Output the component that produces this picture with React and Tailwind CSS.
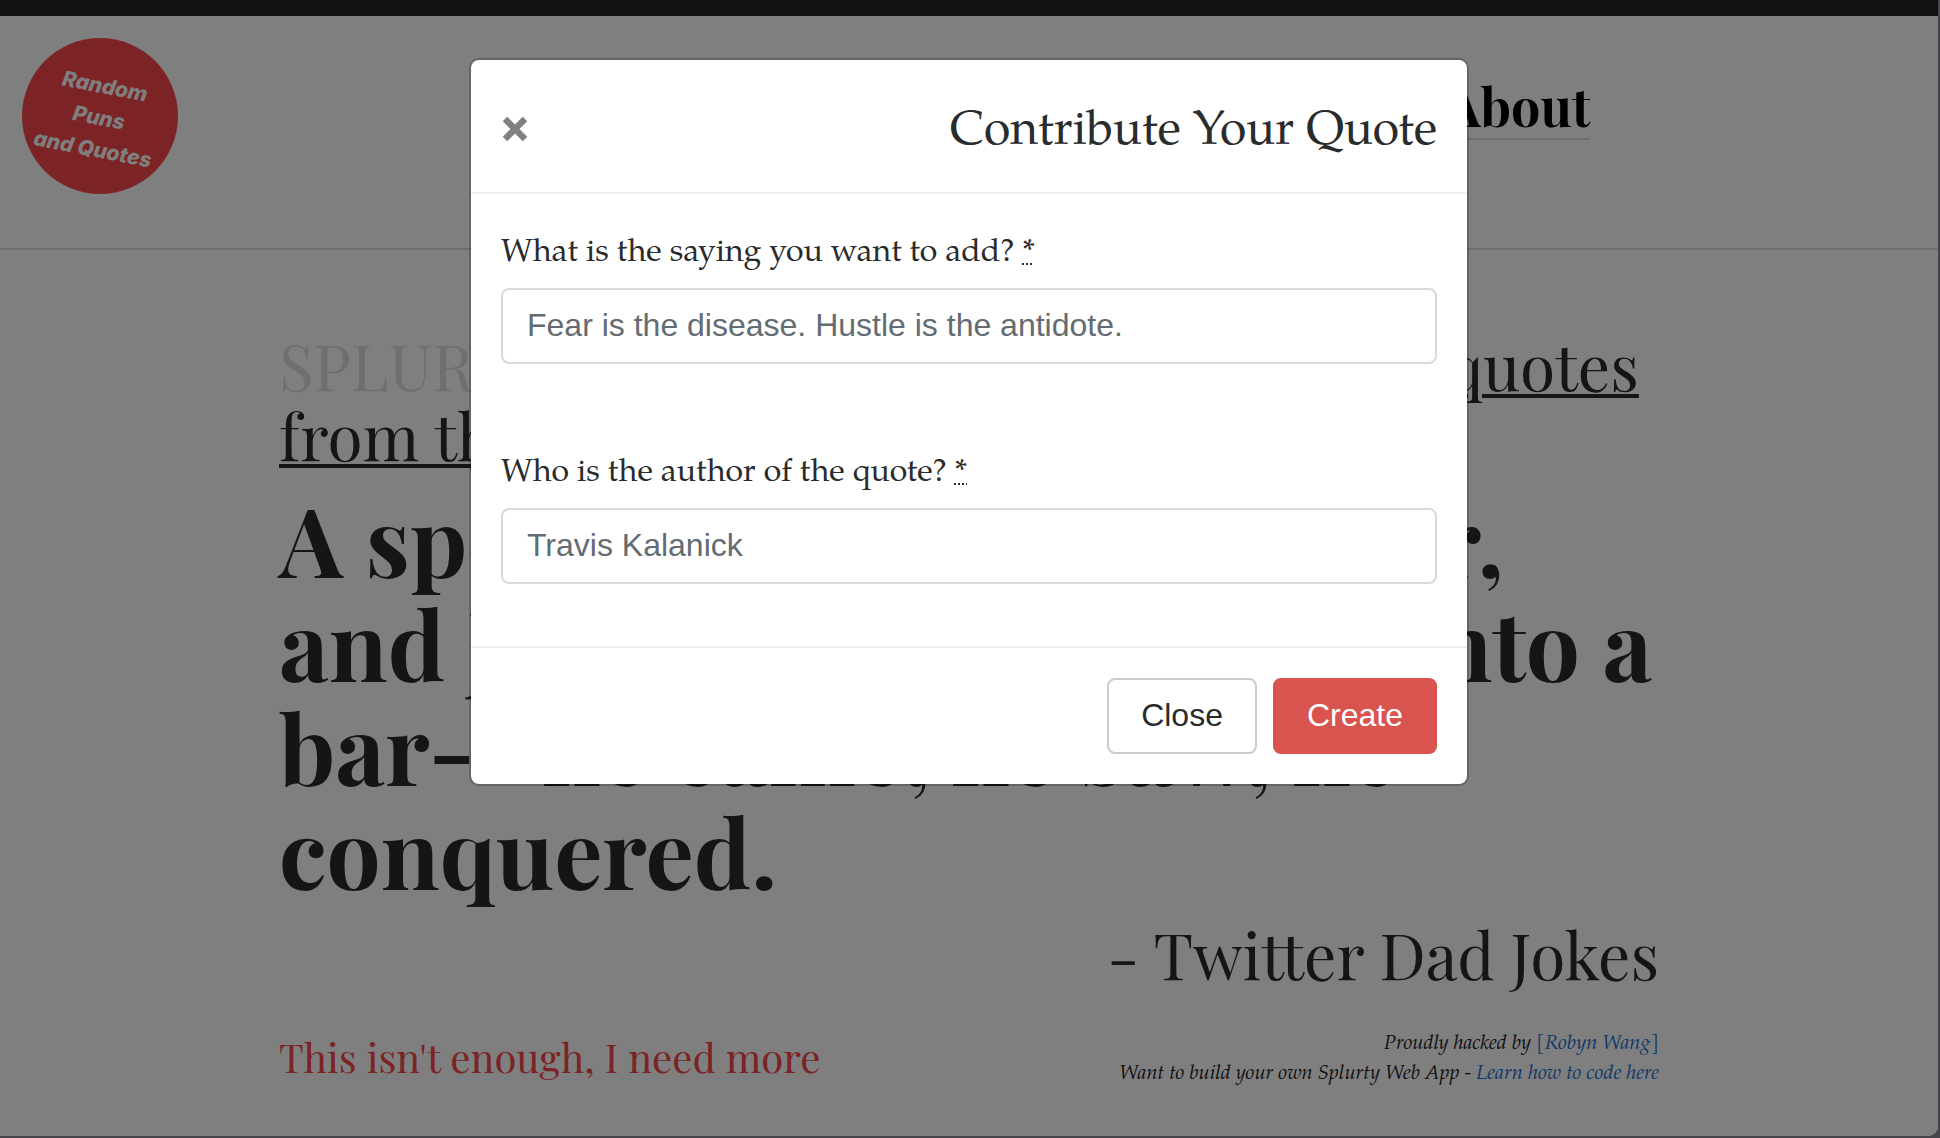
import React from "react";

const serif = "font-['Playfair_Display','Liberation_Serif',serif]";
const book = "font-['Palatino','Palatino_Linotype','TeX_Gyre_Pagella','P052','URW_Palladio_L','Book_Antiqua','Liberation_Serif',serif]";
const sans = "font-['Liberation_Sans',sans-serif]";

function Header() {
  return (
    <header className="flex items-start justify-between border-b-2 border-[#dfdfdf] px-[22px] pt-[22px] pb-[54px]">
      <a
        href="#home"
        className="flex size-[156px] items-center justify-center rounded-full bg-[#f8464a] pt-1 pr-0.5 text-center font-['Inter',sans-serif] text-[21px] leading-8 font-extrabold text-white italic"
      >
        <span className="block rotate-[11deg] whitespace-nowrap">
          Random
          <br />
          Puns
          <br />
          and Quotes
        </span>
      </a>
      <nav className={`mr-[17.2%] pt-9 ${serif}`}>
        <a href="#about" className="block border-b-2 border-[#dcdcdc] text-[52px] leading-[64px] font-bold text-black">
          About
        </a>
      </nav>
    </header>
  );
}

function QuotePage() {
  return (
    <main className={`mx-auto w-full max-w-[1440px] px-[30px] pt-20 text-[#292b2c] ${serif}`}>
      <h1 className="text-[64px] leading-[70px]">
        <span className="text-[#dedede]">SPLURTY</span> - a collection of{" "}
        <span className="underline decoration-4 underline-offset-[3px]">
          your favourite quotes
          <br />
          from the web
        </span>
      </h1>
      <blockquote className="mt-4 text-[96px] leading-[104px] font-bold">
        A sperm doner, a carpenter,
        <br />
        and Julius Caesar walked into a
        <br />
        bar-- he came, he saw, he
        <br />
        conquered.
      </blockquote>
      <p className="mt-4 text-right text-[64px] leading-[72px]">- Twitter Dad Jokes</p>
      <footer className="mt-[34px] flex items-center justify-between">
        <a href="#more" className="text-[40px] leading-[48px] text-[#f8464a]">
          This isn't enough, I need more
        </a>
        <p className={`pt-1.5 text-right text-[20px] leading-[30px] text-[#1c1c1c] italic ${book}`}>
          Proudly hacked by{" "}
          <a href="#author" className="text-[#1a70d0]">[Robyn Wang]</a>
          <br />
          Want to build your own Splurty Web App -{" "}
          <a href="#learn" className="text-[#1a70d0]">Learn how to code here</a>
        </p>
      </footer>
    </main>
  );
}

function Field({ id, label, placeholder }) {
  return (
    <div className="mb-8 flex flex-col gap-1">
      <label htmlFor={id} className="text-[32px] leading-[60px]">
        {label}{" "}
        <abbr title="required" className="underline decoration-dotted decoration-2 underline-offset-2">*</abbr>
      </label>
      <input
        id={id}
        type="text"
        placeholder={placeholder}
        className={`h-[76px] w-full rounded-lg border-2 border-[#d9d9d9] bg-white px-6 pb-0.5 text-[32px] text-[#464a4c] placeholder:text-[#636c72] ${sans}`}
      />
    </div>
  );
}

function QuoteModal() {
  return (
    <div className="absolute inset-0 flex items-start justify-center bg-black/50 pt-[58px]">
      <div
        role="dialog"
        aria-modal="true"
        aria-labelledby="modal-title"
        className={`w-full max-w-[1000px] rounded-[10px] border-2 border-black/20 bg-white bg-clip-padding text-[#292b2c] ${book}`}
      >
        <div className="flex items-center justify-between border-b-2 border-[#eceeef] px-[30px] pt-8 pb-[26px]">
          <button type="button" aria-label="Close dialog" className="text-[#808080]">
            <svg viewBox="0 0 28 26" className="h-[26px] w-7" stroke="currentColor" strokeWidth="6.4" fill="none">
              <path d="M4 3 24 23M24 3 4 23" />
            </svg>
          </button>
          <h2 id="modal-title" className="pt-2 text-[48px] leading-[66px]">Contribute Your Quote</h2>
        </div>
        <form onSubmit={(event) => event.preventDefault()}>
          <div className="flex flex-col gap-12 p-[30px]">
            <Field
              id="message"
              label="What is the saying you want to add?"
              placeholder="Fear is the disease. Hustle is the antidote."
            />
            <Field id="author-name" label="Who is the author of the quote?" placeholder="Travis Kalanick" />
          </div>
          <div className={`flex justify-end gap-4 border-t-2 border-[#eceeef] p-[30px] text-[32px] ${sans}`}>
            <button type="button" className="h-[76px] rounded-lg border-2 border-[#cccccc] bg-white px-8 pb-0.5">
              Close
            </button>
            <button type="submit" className="h-[76px] rounded-lg border-2 border-[#d9534f] bg-[#d9534f] px-8 pb-0.5 text-white">
              Create
            </button>
          </div>
        </form>
      </div>
    </div>
  );
}

export default function App() {
  return (
    <div className="flex min-h-screen bg-[#45444a] pr-0.5 pb-0.5">
      <div className="relative flex-1 overflow-hidden rounded-br-[10px] bg-white">
        <div className="h-4 bg-[#222222]" />
        <Header />
        <QuotePage />
        <QuoteModal />
      </div>
    </div>
  );
}
